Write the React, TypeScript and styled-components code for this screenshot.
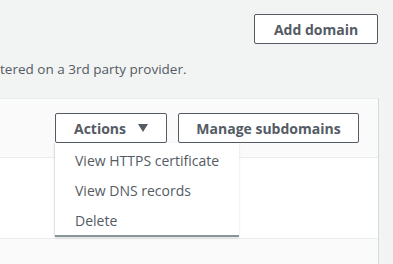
import styled, { createGlobalStyle } from 'styled-components';

const GlobalStyle = createGlobalStyle`
  html, body {
    margin: 0;
    padding: 0;
    background-color: #f2f3f3;
    font-family: "Open Sans", "Noto Sans", sans-serif;
    color: #545b64;
    overflow: hidden;
  }
`;

const Page = styled.div`
  width: 393px;
  height: 264px;
  display: flex;
  flex-direction: column;
`;

const TopBar = styled.div`
  display: flex;
  justify-content: flex-end;
  padding: 14px 15px 0 0;
`;

const Button = styled.button<{ $width: number }>`
  width: ${(p) => p.$width}px;
  height: 30px;
  box-sizing: border-box;
  padding: 0;
  background-color: #ffffff;
  border: 1px solid #545b64;
  border-radius: 2px;
  color: #545b64;
  font-family: inherit;
  font-size: 14px;
  font-weight: 700;
  white-space: nowrap;
  display: flex;
  align-items: center;
  justify-content: center;
  gap: 12px;
  cursor: pointer;
`;

const Description = styled.p`
  margin: 15px 0 0 0;
  font-size: 13.5px;
  line-height: 20px;
  white-space: nowrap;
`;

const Panel = styled.section`
  margin: 19px 14px 0 -1px;
  flex: 1;
  display: flex;
  flex-direction: column;
  border: 1px solid #eaeded;
  border-bottom: none;
  border-right-color: #d5dbdb;
  background-color: #fafafa;
`;

const PanelHeader = styled.div`
  height: 59px;
  display: flex;
  justify-content: flex-end;
  align-items: flex-start;
  gap: 11px;
  padding: 14px 19px 0 0;
  box-sizing: border-box;
  border-bottom: 1px solid #eaeded;
  background-color: #fafafa;
`;

const PanelBody = styled.div`
  height: 80px;
  background-color: #ffffff;
  border-bottom: 1px solid #eaeded;
`;

const ActionsWrap = styled.div`
  position: relative;
`;

const Caret = styled.span`
  width: 0;
  height: 0;
  border-left: 5px solid transparent;
  border-right: 5px solid transparent;
  border-top: 8px solid #545b64;
`;

const Menu = styled.ul`
  position: absolute;
  top: 30px;
  left: 0;
  width: 184px;
  margin: 0;
  padding: 2px 0 0;
  list-style: none;
  background-color: #ffffff;
  border-bottom: 2px solid #879596;
  box-shadow: 0 1px 2px rgba(0, 28, 36, 0.15), -1px 0 1px rgba(0, 28, 36, 0.08);
  z-index: 10;
`;

const MenuItem = styled.li`
  height: 30px;
  display: flex;
  align-items: center;
  padding-left: 20px;
  font-size: 14px;
  font-weight: 400;
  color: #545b64;
  white-space: nowrap;
`;

export default function App() {
  return (
    <Page>
      <GlobalStyle />
      <TopBar>
        <Button $width={124}>Add domain</Button>
      </TopBar>
      <Description>tered on a 3rd party provider.</Description>
      <Panel>
        <PanelHeader>
          <ActionsWrap>
            <Button $width={112}>
              Actions <Caret />
            </Button>
            <Menu>
              <MenuItem>View HTTPS certificate</MenuItem>
              <MenuItem>View DNS records</MenuItem>
              <MenuItem>Delete</MenuItem>
            </Menu>
          </ActionsWrap>
          <Button $width={181}>Manage subdomains</Button>
        </PanelHeader>
        <PanelBody />
      </Panel>
    </Page>
  );
}
